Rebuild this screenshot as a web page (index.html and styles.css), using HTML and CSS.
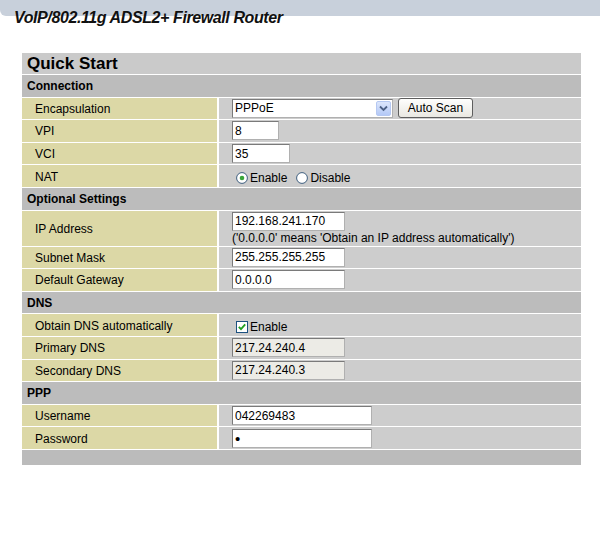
FILE: index.html
```html
<!DOCTYPE html>
<html lang="en">
<head>
    <meta charset="UTF-8">
    <title>Quick Start</title>
    <link rel="stylesheet" href="styles.css">
</head>
<body>
    <div class="banner">
        <div class="strip"></div>
        <h1>VoIP/802.11g ADSL2+ Firewall Router</h1>
    </div>

    <form class="quick-start">
        <div class="title">Quick Start</div>

        <div class="section">Connection</div>
        <div class="label">Encapsulation</div>
        <div class="value">
            <div class="select">
                <span class="select-text">PPPoE</span>
                <span class="arrow">
                    <svg width="9" height="7" viewBox="0 0 9 7"><path d="M1 1.5 L4.5 5 L8 1.5" fill="none" stroke="#4d6185" stroke-width="1.8"/></svg>
                </span>
            </div>
            <button type="button" class="btn">Auto Scan</button>
        </div>
        <div class="label">VPI</div>
        <div class="value"><input class="field w-vpi" type="text" value="8" readonly></div>
        <div class="label">VCI</div>
        <div class="value"><input class="field w-vci" type="text" value="35" readonly></div>
        <div class="label">NAT</div>
        <div class="value low">
            <label class="opt">
                <svg class="mark" width="12" height="12" viewBox="0 0 12 12"><circle cx="6" cy="6" r="5.4" fill="#fff" stroke="#3f5f7f"/><circle cx="6" cy="6" r="2.3" fill="#3aa63a"/></svg>Enable
            </label>
            <label class="opt">
                <svg class="mark" width="12" height="12" viewBox="0 0 12 12"><circle cx="6" cy="6" r="5.4" fill="#fff" stroke="#3f5f7f"/></svg>Disable
            </label>
        </div>

        <div class="section">Optional Settings</div>
        <div class="label">IP Address</div>
        <div class="value stacked">
            <input class="field w-ip" type="text" value="192.168.241.170" readonly>
            <span class="note">('0.0.0.0' means 'Obtain an IP address automatically')</span>
        </div>
        <div class="label">Subnet Mask</div>
        <div class="value"><input class="field w-ip" type="text" value="255.255.255.255" readonly></div>
        <div class="label">Default Gateway</div>
        <div class="value"><input class="field w-ip" type="text" value="0.0.0.0" readonly></div>

        <div class="section">DNS</div>
        <div class="label">Obtain DNS automatically</div>
        <div class="value low">
            <label class="opt">
                <svg class="mark" width="12" height="12" viewBox="0 0 12 12"><rect x="0.5" y="0.5" width="11" height="11" fill="#fff" stroke="#1c5180"/><path d="M2.8 5.8 L5 8.2 L9.2 3.4" fill="none" stroke="#22a022" stroke-width="1.8"/></svg>Enable
            </label>
        </div>
        <div class="label">Primary DNS</div>
        <div class="value"><input class="field w-ip locked" type="text" value="217.24.240.4" readonly></div>
        <div class="label">Secondary DNS</div>
        <div class="value"><input class="field w-ip locked" type="text" value="217.24.240.3" readonly></div>

        <div class="section">PPP</div>
        <div class="label">Username</div>
        <div class="value"><input class="field w-user" type="text" value="042269483" readonly></div>
        <div class="label">Password</div>
        <div class="value"><input class="field w-user secret" type="password" value="x" readonly></div>

        <div class="footer"></div>
    </form>
</body>
</html>
```

FILE: styles.css
```css
body {
    margin: 0;
    background: #fff;
    color: #000;
    font-family: "Liberation Sans", Arial, sans-serif;
    font-size: 12px;
}
.banner {
    height: 53px;
}
.strip {
    height: 16px;
    background: #c8d0db;
    border-bottom-left-radius: 6px;
}
h1 {
    margin: -7px 0 0 14px; /* title sits half over the strip */
    font-size: 16px;
    line-height: 18px;
    font-style: italic;
    font-weight: bold;
    letter-spacing: -0.4px;
    color: #111;
}
.quick-start {
    display: grid;
    grid-template-columns: 195px 1fr;
    grid-template-rows: 21px repeat(6, 21.6px) 35px repeat(9, 21.6px) 15px;
    gap: 1px 2px;
    width: 559px;
    margin: 0 0 0 22px;
}
.title {
    grid-column: 1 / -1;
    background: #cacaca;
    font-size: 17px;
    font-weight: bold;
    line-height: 21px;
    padding-left: 5px;
}
.section {
    grid-column: 1 / -1;
    display: flex;
    align-items: center;
    padding: 1px 0 0 5px;
    background: #bcbcbc;
    font-weight: bold;
}
.label {
    display: flex;
    align-items: center;
    padding: 1px 0 0 13px;
    background: #dcd8a6;
}
.value {
    display: flex;
    align-items: center;
    padding-left: 13px;
    background: #cdcdcd;
}
.value.low {
    padding-top: 3px;
}
.value.stacked {
    flex-direction: column;
    align-items: flex-start;
    justify-content: center;
}
.note {
    line-height: 14px;
}
.footer {
    grid-column: 1 / -1;
    background: #bbbbbb;
}
.field {
    height: 19px;
    box-sizing: border-box;
    margin: 0;
    padding: 0 2px;
    border: 1px solid;
    border-color: #7a7a7a #b0b0b0 #b0b0b0 #7a7a7a;
    background: #fff;
    color: #000;
    font: 12px "Liberation Sans", Arial, sans-serif;
    outline: none;
}
.field.locked {
    background: #ecebe6;
}
.field.secret {
    font-size: 15px;
}
.w-vpi { width: 47px; }
.w-vci { width: 58px; }
.w-ip { width: 113px; }
.w-user { width: 140px; }
.select {
    display: flex;
    align-items: center;
    width: 161px;
    height: 19px;
    box-sizing: border-box;
    border: 1px solid;
    border-color: #7a7a7a #b0b0b0 #b0b0b0 #7a7a7a;
    background: #fff;
}
.select-text {
    flex: 1;
    padding-left: 2px;
}
.arrow {
    display: flex;
    align-items: center;
    justify-content: center;
    width: 15px;
    height: 15px;
    margin-right: 1px;
    box-sizing: border-box;
    border: 1px solid #b5c8f2;
    border-radius: 2px;
    background: linear-gradient(#dce6fc, #b4c9f6);
}
.btn {
    width: 75px;
    height: 20px;
    margin: 0 0 0 5px;
    padding: 0;
    border: 1px solid #5e5e5e;
    border-radius: 3px;
    background: linear-gradient(#fefefd, #e9e8e2);
    color: #000;
    font: 12px "Liberation Sans", Arial, sans-serif;
}
.opt {
    display: flex;
    align-items: center;
}
.opt + .opt {
    margin-left: 5px;
}
.mark {
    margin: 0 2px 0 4px;
}
```
